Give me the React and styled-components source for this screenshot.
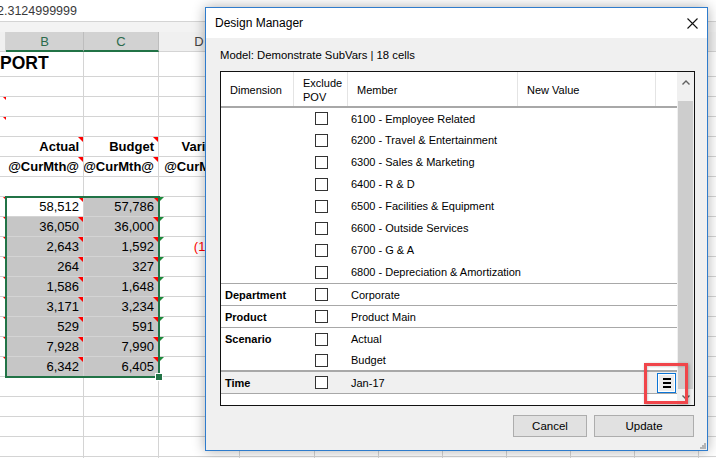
import React from 'react'
import styled, { createGlobalStyle, css } from 'styled-components'

const GlobalStyle = createGlobalStyle`
  html, body {
    margin: 0;
    padding: 0;
    background: #ffffff;
    overflow: hidden;
  }
`;

const COLS = [6, 78, 75, 81, 75, 64, 64, 64, 64, 64, 64, 64];
const GRID = '#d4d4d4';
const GREEN = '#217346';

// one entry per sheet row: height + cells by column index
const sheetRows = [
    { h: 25, cells: { 0: { text: 'PORT', title: true, span: 2 } } },
    { h: 20, cells: {} },
    { h: 20, cells: { 0: { mark: 'red' } } },
    { h: 20, cells: { 0: { mark: 'red' } } },
    { h: 20, cells: { 1: { text: 'Actual', bold: true, mark: 'red' }, 2: { text: 'Budget', bold: true, mark: 'red' }, 3: { text: 'Variance', bold: true } } },
    { h: 20, cells: { 1: { text: '@CurMth@', bold: true, mark: 'red' }, 2: { text: '@CurMth@', bold: true, mark: 'red' }, 3: { text: '@CurMth@', bold: true } } },
    { h: 20, cells: {} },
];

const values = [
    ['58,512', '57,786'],
    ['36,050', '36,000'],
    ['2,643', '1,592'],
    ['264', '327'],
    ['1,586', '1,648'],
    ['3,171', '3,234'],
    ['529', '591'],
    ['7,928', '7,990'],
    ['6,342', '6,405'],
];

values.forEach(([b, c], i) => {
    sheetRows.push({
        h: 20,
        cells: {
            0: { mark: 'red' },
            1: { text: b, mark: 'red', sel: i > 0 },
            2: { text: c, mark: 'red', sel: true },
            3: { mark: 'green', text: i === 2 ? '(1,051)' : undefined, red: true },
        },
    });
});
for (let i = 0; i < 5; i++) sheetRows.push({ h: 20, cells: {} });

const designRows = [
    { member: '6100 - Employee Related', h: 21 },
    { member: '6200 - Travel & Entertainment', h: 22 },
    { member: '6300 - Sales & Marketing', h: 22 },
    { member: '6400 - R & D', h: 22 },
    { member: '6500 - Facilities & Equipment', h: 22 },
    { member: '6600 - Outside Services', h: 22 },
    { member: '6700 - G & A', h: 22 },
    { member: '6800 - Depreciation & Amortization', h: 22, sep: 1 },
    { dim: 'Department', member: 'Corporate', h: 21, sep: 1 },
    { dim: 'Product', member: 'Product Main', h: 21, sep: 1 },
    { dim: 'Scenario', member: 'Actual', h: 22 },
    { member: 'Budget', h: 20, sep: 2 },
    { dim: 'Time', member: 'Jan-17', h: 21, sep: 1, active: true, menu: true },
];

function App() {
    return (
        <Page>
            <GlobalStyle />
            <FormulaBar>
                <FormulaText>2.3124999999</FormulaText>
            </FormulaBar>
            <Strip />
            <SheetGrid>
                {['', 'B', 'C', 'D', '', '', '', '', '', '', '', ''].map((l, i) => (
                    <ColHead key={i} $selected={i === 1 || i === 2}>{l}</ColHead>
                ))}
                {sheetRows.map((row, r) => {
                    const out = [];
                    for (let c = 0; c < COLS.length; c++) {
                        const cell = row.cells[c] || {};
                        if (c === 1 && row.cells[0] && row.cells[0].span) continue;
                        out.push(
                            <Cell
                                key={r + '-' + c}
                                $h={row.h}
                                $span={cell.span}
                                $bold={cell.bold}
                                $title={cell.title}
                                $mark={cell.mark}
                                $sel={cell.sel}
                                $red={cell.red}
                            >
                                {cell.text}
                            </Cell>
                        );
                    }
                    return out;
                })}
            </SheetGrid>
            <Selection>
                <Handle />
            </Selection>

            <Dialog>
                <TitleBar>
                    <Title>Design Manager</Title>
                    <svg width="11" height="11" viewBox="0 0 11 11">
                        <path d="M0.5 0.5 L10.5 10.5 M10.5 0.5 L0.5 10.5" stroke="#111" strokeWidth="1.1" fill="none" />
                    </svg>
                </TitleBar>
                <Body>
                    <ModelLabel>Model: Demonstrate SubVars | 18 cells</ModelLabel>
                    <GridBox>
                        <Table>
                            <HeaderRow>
                                <HeadCell $w={73}>Dimension</HeadCell>
                                <HeadCell $w={54}>Exclude<br />POV</HeadCell>
                                <HeadCell $w={170}>Member</HeadCell>
                                <HeadCell $w={138}>New Value</HeadCell>
                                <HeadCell $w={21} />
                            </HeaderRow>
                            {designRows.map((d, i) => (
                                <DataRow key={i} $h={d.h} $sep={d.sep} $active={d.active}>
                                    <DimCell>{d.dim}</DimCell>
                                    <BoxCell><CheckBox /></BoxCell>
                                    <MemberCell>{d.member}</MemberCell>
                                    <ValueCell />
                                    <MenuCell>
                                        {d.menu && (
                                            <MenuButton>
                                                <svg width="8" height="10" viewBox="0 0 8 10">
                                                    <rect x="0" y="0" width="8" height="2" fill="#000" />
                                                    <rect x="0" y="4" width="8" height="2" fill="#000" />
                                                    <rect x="0" y="8" width="8" height="2" fill="#000" />
                                                </svg>
                                            </MenuButton>
                                        )}
                                    </MenuCell>
                                </DataRow>
                            ))}
                        </Table>
                        <ScrollBar>
                            <ArrowUp>
                                <svg width="8" height="5" viewBox="0 0 8 5">
                                    <polyline points="0.5,4.5 4,1 7.5,4.5" stroke="#606060" strokeWidth="1.4" fill="none" />
                                </svg>
                            </ArrowUp>
                            <Thumb />
                            <ArrowDown>
                                <svg width="8" height="5" viewBox="0 0 8 5">
                                    <polyline points="0.5,0.5 4,4 7.5,0.5" stroke="#606060" strokeWidth="1.4" fill="none" />
                                </svg>
                            </ArrowDown>
                        </ScrollBar>
                    </GridBox>
                    <Footer>
                        <Button $w={74}>Cancel</Button>
                        <Button $w={100}>Update</Button>
                    </Footer>
                </Body>
                <Highlight />
                <Grip>
                    <svg width="7" height="7" viewBox="0 0 7 7">
                        <rect x="5" y="1" width="2" height="2" fill="#b4b4b4" />
                        <rect x="3" y="3" width="2" height="2" fill="#b4b4b4" />
                        <rect x="5" y="3" width="2" height="2" fill="#b4b4b4" />
                        <rect x="1" y="5" width="2" height="2" fill="#b4b4b4" />
                        <rect x="3" y="5" width="2" height="2" fill="#b4b4b4" />
                        <rect x="5" y="5" width="2" height="2" fill="#b4b4b4" />
                    </svg>
                </Grip>
            </Dialog>
        </Page>
    )
}

export default App

const Page = styled.div`
    position: relative;
    width: 716px;
    height: 458px;
    overflow: hidden;
    font-family: "Liberation Sans", Arial, sans-serif;
    background: #fff;
`;

const FormulaBar = styled.div`
    height: 21px;
    border-bottom: 1px solid ${GRID};
    display: flex;
    align-items: center;
    overflow: hidden;
`;

const FormulaText = styled.span`
    margin-left: -3px;
    font-size: 12.5px;
    color: #3a3a3a;
`;

const Strip = styled.div`
    height: 10px;
    background: #f3f3f3;
`;

const SheetGrid = styled.div`
    display: grid;
    grid-template-columns: ${COLS.map(c => c + 'px').join(' ')};
    font-size: 13px;
`;

const ColHead = styled.div`
    box-sizing: border-box;
    height: 20px;
    display: flex;
    align-items: center;
    justify-content: center;
    font-size: 13px;
    color: #444;
    background: #f0f0f0;
    border-right: 1px solid ${GRID};
    border-bottom: 1px solid ${GRID};
    ${p => p.$selected && css`
        background: #d2d2d2;
        color: #2b6a4b;
        border-right-color: #bdbdbd;
        border-bottom: 2px solid ${GREEN};
    `}
`;

const Cell = styled.div`
    position: relative;
    box-sizing: border-box;
    height: ${p => p.$h}px;
    grid-column: span ${p => p.$span || 1};
    display: flex;
    align-items: flex-end;
    justify-content: ${p => (p.$title ? 'flex-start' : 'flex-end')};
    padding: 0 4px 2px;
    white-space: nowrap;
    overflow: hidden;
    border-right: 1px solid ${GRID};
    border-bottom: 1px solid ${GRID};
    background: ${p => (p.$sel ? '#c6c6c6' : '#fff')};
    color: ${p => (p.$red ? '#ff0000' : '#000')};
    font-weight: ${p => (p.$bold || p.$title ? 700 : 400)};
    ${p => p.$title && css`
        font-size: 17.5px;
        padding: 0 0 2px 0;
    `}
    ${p => p.$mark === 'red' && css`
        &::after {
            content: '';
            position: absolute;
            top: 0;
            right: 0;
            border-top: 5px solid #ff0000;
            border-left: 5px solid transparent;
        }
    `}
    ${p => p.$mark === 'green' && css`
        &::after {
            content: '';
            position: absolute;
            top: 0;
            left: 0;
            border-top: 5px solid #1e8a3c;
            border-right: 5px solid transparent;
        }
    `}
`;

const Selection = styled.div`
    position: absolute;
    left: 5px;
    top: 196px;
    width: 155px;
    height: 182px;
    box-sizing: border-box;
    border: 2px solid ${GREEN};
    pointer-events: none;
`;

const Handle = styled.div`
    position: absolute;
    right: -5px;
    bottom: -5px;
    width: 6px;
    height: 6px;
    background: ${GREEN};
    border: 1px solid #fff;
`;

const Dialog = styled.div`
    position: absolute;
    left: 205px;
    top: 7px;
    width: 503px;
    height: 444px;
    box-sizing: border-box;
    border: 1px solid #2f7ccc;
    background: #f0f0f0;
    box-shadow: 0 0 12px rgba(0, 0, 0, 0.32);
    display: flex;
    flex-direction: column;
    font-size: 11px;
    color: #000;
`;

const TitleBar = styled.div`
    height: 30px;
    flex: none;
    background: #fff;
    display: flex;
    align-items: center;
    justify-content: space-between;
    padding: 0 9px 0 9px;
`;

const Title = styled.span`
    font-size: 12px;
`;

const Body = styled.div`
    flex: 1;
    display: flex;
    flex-direction: column;
    padding: 0 12px 0 14px;
`;

const ModelLabel = styled.div`
    height: 33px;
    display: flex;
    align-items: center;
    font-size: 11.3px;
`;

const GridBox = styled.div`
    height: 335px;
    box-sizing: border-box;
    border: 1px solid #111;
    background: #fff;
    display: flex;
`;

const Table = styled.div`
    width: 456px;
    display: flex;
    flex-direction: column;
`;

const HeaderRow = styled.div`
    height: 34px;
    display: flex;
    border-bottom: 2px solid #a8a8a8;
`;

const HeadCell = styled.div`
    box-sizing: border-box;
    width: ${p => p.$w}px;
    padding-left: 9px;
    padding-top: 2px;
    display: flex;
    align-items: center;
    line-height: 14px;
    border-right: 1px solid #e4e4e4;
    &:last-child {
        border-right: none;
    }
`;

const DataRow = styled.div`
    height: ${p => p.$h}px;
    display: flex;
    align-items: center;
    border-bottom: ${p => (p.$sep ? `${p.$sep}px solid #a8a8a8` : 'none')};
    background: ${p => (p.$active ? '#f0f0f0' : '#fff')};
`;

const DimCell = styled.div`
    width: 73px;
    box-sizing: border-box;
    padding-left: 4px;
    font-weight: 700;
`;

const BoxCell = styled.div`
    width: 54px;
    display: flex;
    justify-content: center;
`;

const CheckBox = styled.div`
    width: 13px;
    height: 13px;
    box-sizing: border-box;
    border: 1px solid #333;
    background: #fff;
`;

const MemberCell = styled.div`
    width: 170px;
    box-sizing: border-box;
    padding-left: 3px;
    white-space: nowrap;
`;

const ValueCell = styled.div`
    width: 138px;
`;

const MenuCell = styled.div`
    width: 21px;
    display: flex;
    justify-content: center;
`;

const MenuButton = styled.div`
    width: 19px;
    height: 20px;
    box-sizing: border-box;
    border: 1px solid #0b74d5;
    box-shadow: inset 0 0 0 1px #fff;
    background: #ececec;
    display: flex;
    align-items: center;
    justify-content: center;
`;

const ScrollBar = styled.div`
    width: 17px;
    background: #f0f0f0;
    display: flex;
    flex-direction: column;
`;

const ArrowUp = styled.div`
    height: 29px;
    display: flex;
    justify-content: center;
    padding-top: 8px;
    box-sizing: border-box;
`;

const Thumb = styled.div`
    flex: 1;
    margin: 0 1px;
    background: #cdcdcd;
`;

const ArrowDown = styled.div`
    height: 16px;
    display: flex;
    justify-content: center;
    align-items: center;
`;

const Footer = styled.div`
    display: flex;
    justify-content: flex-end;
    gap: 7px;
    margin-top: 9px;
    padding-right: 1px;
`;

const Button = styled.div`
    width: ${p => p.$w}px;
    height: 22px;
    box-sizing: border-box;
    border: 1px solid #adadad;
    background: #e1e1e1;
    display: flex;
    align-items: center;
    justify-content: center;
    font-size: 11.5px;
`;

const Highlight = styled.div`
    position: absolute;
    left: 438px;
    top: 355px;
    width: 44px;
    height: 41px;
    box-sizing: border-box;
    border: 3px solid #f0454a;
    box-shadow: 1px 1px 3px rgba(0, 0, 0, 0.3), inset 1px 1px 2px rgba(0, 0, 0, 0.15);
    pointer-events: none;
`;

const Grip = styled.div`
    position: absolute;
    right: 1px;
    bottom: 1px;
    line-height: 0;
`;
